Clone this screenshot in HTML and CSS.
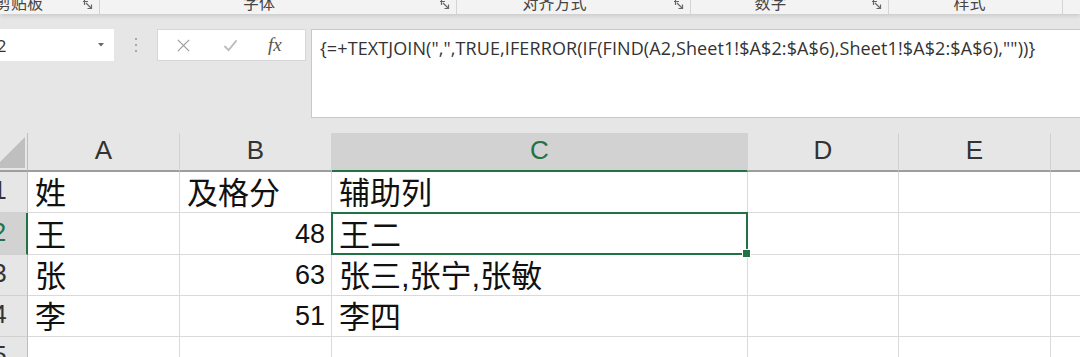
FILE: index.html
```html
<!DOCTYPE html>
<html lang="zh-CN">
<head>
    <meta charset="UTF-8">
    <meta name="viewport" content="width=device-width, initial-scale=1.0">
    <title>TEXTJOIN 辅助列</title>
    <link rel="stylesheet" href="styles.css">
</head>
<body>

    <!-- Ribbon group labels (cut off at the top) -->
    <div class="ribbon">
        <div class="ribbon-group group-clipboard">
            <span class="group-label">剪贴板</span>
            <svg class="launcher" viewBox="0 0 10 10"><path d="M1.5 0V5M0 1.5H5M3 3L8.5 8.5M8.5 4.5V8.5H4.5"/></svg>
        </div>
        <div class="ribbon-group group-font">
            <span class="group-label">字体</span>
            <svg class="launcher" viewBox="0 0 10 10"><path d="M1.5 0V5M0 1.5H5M3 3L8.5 8.5M8.5 4.5V8.5H4.5"/></svg>
        </div>
        <div class="ribbon-group group-align">
            <span class="group-label">对齐方式</span>
            <svg class="launcher" viewBox="0 0 10 10"><path d="M1.5 0V5M0 1.5H5M3 3L8.5 8.5M8.5 4.5V8.5H4.5"/></svg>
        </div>
        <div class="ribbon-group group-number">
            <span class="group-label">数字</span>
            <svg class="launcher" viewBox="0 0 10 10"><path d="M1.5 0V5M0 1.5H5M3 3L8.5 8.5M8.5 4.5V8.5H4.5"/></svg>
        </div>
        <div class="ribbon-group group-style">
            <span class="group-label">样式</span>
        </div>
    </div>

    <!-- Name box + formula bar -->
    <div class="formula-bar">
        <div class="name-box">
            <span class="name-text">C2</span>
            <svg class="name-arrow" viewBox="0 0 6 4"><path d="M0 0H6L3 3.5Z"/></svg>
        </div>
        <div class="grip">
            <span></span><span></span><span></span>
        </div>
        <div class="fx-buttons">
            <svg class="fx-icon" viewBox="0 0 16 16"><path class="cancel" d="M2 2L14 14M14 2L2 14"/></svg>
            <svg class="fx-icon" viewBox="0 0 16 16"><path class="enter" d="M1.5 8.5L6 13L14.5 2.5"/></svg>
            <span class="fx-label">fx</span>
        </div>
        <div class="formula-input">{=+TEXTJOIN(",",TRUE,IFERROR(IF(FIND(A2,Sheet1!$A$2:$A$6),Sheet1!$A$2:$A$6),""))}</div>
    </div>

    <!-- Worksheet grid -->
    <div class="sheet">
        <div class="corner"></div>
        <div class="col-head">A</div>
        <div class="col-head">B</div>
        <div class="col-head active">C</div>
        <div class="col-head">D</div>
        <div class="col-head">E</div>
        <div class="col-head"></div>

        <div class="row-head">1</div>
        <div class="cell">姓</div>
        <div class="cell">及格分</div>
        <div class="cell">辅助列</div>
        <div class="cell"></div>
        <div class="cell"></div>
        <div class="cell"></div>

        <div class="row-head active">2</div>
        <div class="cell">王</div>
        <div class="cell num">48</div>
        <div class="cell selected">王二</div>
        <div class="cell"></div>
        <div class="cell"></div>
        <div class="cell"></div>

        <div class="row-head">3</div>
        <div class="cell">张</div>
        <div class="cell num">63</div>
        <div class="cell">张三,张宁,张敏</div>
        <div class="cell"></div>
        <div class="cell"></div>
        <div class="cell"></div>

        <div class="row-head">4</div>
        <div class="cell">李</div>
        <div class="cell num">51</div>
        <div class="cell">李四</div>
        <div class="cell"></div>
        <div class="cell"></div>
        <div class="cell"></div>

        <div class="row-head">5</div>
        <div class="cell"></div>
        <div class="cell"></div>
        <div class="cell"></div>
        <div class="cell"></div>
        <div class="cell"></div>
        <div class="cell"></div>
    </div>

</body>
</html>
```

FILE: styles.css
```css
html, body {
    margin: 0;
    padding: 0;
    overflow: hidden;
}

body {
    width: 1080px;
    height: 357px;
    background-color: #e6e6e6;
    font-family: "Liberation Sans", "Noto Sans CJK SC", sans-serif;
    color: #222;
}

/* ---------- ribbon ---------- */

.ribbon {
    height: 14px;
    display: flex;
    align-items: flex-end;
    background-color: #f3f3f3;
    overflow: hidden;
    position: relative;
    z-index: 1;
    box-shadow: 0 2px 4px rgba(0, 0, 0, 0.12);
}

.ribbon-group {
    height: 19px;
    display: flex;
    align-items: flex-start;
    border-right: 1px solid #d4d4d4;
    box-sizing: border-box;
    position: relative;
}

.group-label {
    font-family: "Noto Sans CJK SC", sans-serif;
    font-size: 16px;
    line-height: 14px;
    color: #444;
    flex: 1;
    text-align: center;
    padding-right: 22px;
}

.launcher {
    width: 10px;
    height: 10px;
    margin-top: 5px;
    margin-right: 6px;
    fill: none;
    stroke: #666;
    stroke-width: 1.2;
}

.group-clipboard { width: 100px; }
.group-clipboard .group-label { text-align: left; padding-right: 0; margin-left: -5px; }
.group-font { width: 357px; }
.group-align { width: 234px; }
.group-number { width: 198px; }
.group-style { width: 174px; }
.group-style .group-label { padding-right: 12px; }

/* ---------- formula bar ---------- */

.formula-bar {
    display: flex;
    align-items: flex-start;
    padding: 15px 0 15px 0;
    margin-left: -28px;
}

.name-box {
    width: 142px;
    height: 32px;
    background-color: #fff;
    display: flex;
    align-items: center;
    box-sizing: border-box;
    padding-left: 14px;
    padding-right: 10px;
}

.name-text {
    flex: 1;
    font-family: "Open Sans", sans-serif;
    font-size: 17px;
    color: #333;
}

.name-arrow {
    width: 6px;
    height: 4px;
    fill: #666;
}

.grip {
    width: 43px;
    height: 32px;
    display: flex;
    flex-direction: column;
    align-items: center;
    justify-content: center;
    gap: 4px;
}

.grip span {
    width: 2px;
    height: 2px;
    background-color: #a8a8a8;
}

.fx-buttons {
    width: 149px;
    height: 32px;
    background-color: #fff;
    border: 1px solid #d6d6d6;
    box-sizing: border-box;
    display: flex;
    align-items: center;
    padding-left: 18px;
    gap: 32px;
}

.fx-icon {
    width: 15px;
    height: 15px;
    fill: none;
    stroke-width: 1.4;
}

.fx-icon .cancel { stroke: #9e9e9e; }
.fx-icon .enter { stroke: #bdbdbd; stroke-width: 2; }

.fx-label {
    font-family: "Liberation Serif", serif;
    font-style: italic;
    font-size: 19px;
    color: #555;
    margin-left: -2px;
}

.formula-input {
    flex: 1;
    height: 89px;
    margin-left: 5px;
    background-color: #fff;
    border: 1px solid #c8c8c8;
    border-right: none;
    box-sizing: border-box;
    padding: 6px 0 0 8px;
    font-family: "Open Sans", sans-serif;
    font-size: 18px;
    letter-spacing: 0.1px;
    color: #333;
    white-space: nowrap;
    overflow: hidden;
}

/* ---------- sheet ---------- */

.sheet {
    display: grid;
    grid-template-columns: 56px 152px 152px 416px 151px 152px 100px;
    grid-template-rows: 39px 41px 42px 41px 41px 41px;
    margin-left: -28px;
    background-color: #fff;
}

.corner, .col-head, .row-head {
    background-color: #e6e6e6;
    font-size: 26px;
    color: #333;
    box-sizing: border-box;
}

.corner {
    position: relative;
    border-right: 1px solid #bdbdbd;
    border-bottom: 2px solid #9e9e9e;
}

.corner::after {
    content: "";
    position: absolute;
    right: 2px;
    bottom: 2px;
    border-left: 31px solid transparent;
    border-bottom: 31px solid #bfbfbf;
}

.col-head {
    display: flex;
    align-items: flex-end;
    justify-content: center;
    padding-bottom: 4px;
    border-right: 1px solid #d2d2d2;
    border-bottom: 2px solid #9e9e9e;
}

.col-head.active {
    background-color: #d2d2d2;
    color: #217346;
    border-bottom-color: #217346;
}

.row-head {
    display: flex;
    align-items: flex-end;
    justify-content: center;
    padding-bottom: 6px;
    border-right: 1px solid #bdbdbd;
    border-bottom: 1px solid #d0d0d0;
}

.row-head.active {
    background-color: #d2d2d2;
    color: #217346;
    border-right: 2px solid #217346;
}

.cell {
    font-size: 31px;
    line-height: 36px;
    padding: 0 6px 0 7px;
    display: flex;
    align-items: flex-end;
    border-right: 1px solid #dadada;
    border-bottom: 1px solid #dadada;
    box-sizing: border-box;
    white-space: nowrap;
    color: #111;
}

.cell.num {
    justify-content: flex-end;
    font-size: 27px;
    padding-bottom: 2px;
}

.cell.selected {
    position: relative;
}

.cell.selected::before {
    content: "";
    position: absolute;
    left: -1px;
    top: -1px;
    right: -1px;
    bottom: -1px;
    border: 2px solid #217346;
}

.cell.selected::after {
    content: "";
    position: absolute;
    right: -4px;
    bottom: -4px;
    width: 7px;
    height: 7px;
    background-color: #217346;
    border: 1px solid #fff;
}
```
